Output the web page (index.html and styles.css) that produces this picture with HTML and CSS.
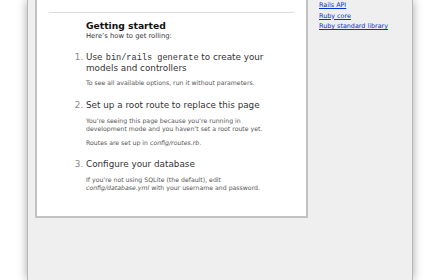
FILE: index.html
```html
<!DOCTYPE html>
<html>
<head>
<meta charset="utf-8">
<link rel="stylesheet" href="styles.css">
</head>
<body>
<div class="window">
  <div class="page">
    <div class="content">
      <div class="getting-started">
        <h1 class="gs-title">Getting started</h1>
        <h2 class="gs-sub">Here’s how to get rolling:</h2>
        <ol class="steps">
          <li class="step">
            <h2 class="step-title">Use <code class="cmd">bin/rails generate</code> to create your models and controllers</h2>
            <p class="step-text">To see all available options, run it without parameters.</p>
          </li>
          <li class="step">
            <h2 class="step-title">Set up a root route to replace this page</h2>
            <p class="step-text">You’re seeing this page because you’re running in development mode and you haven’t set a root route yet.</p>
            <p class="step-text">Routes are set up in <em>config/routes.rb</em>.</p>
          </li>
          <li class="step">
            <h2 class="step-title">Configure your database</h2>
            <p class="step-text">If you’re not using SQLite (the default), edit <em>config/database.yml</em> with your username and password.</p>
          </li>
        </ol>
      </div>
    </div>
    <div class="sidebar">
      <ul class="links">
        <li class="link-item"><a href="#">Rails API</a></li>
        <li class="link-item"><a href="#">Ruby core</a></li>
        <li class="link-item"><a href="#">Ruby standard library</a></li>
      </ul>
    </div>
  </div>
</div>
</body>
</html>
```
FILE: styles.css
```css
html, body {
  margin: 0;
  padding: 0;
  width: 440px;
  height: 280px;
  overflow: hidden;
  background: #ffffff;
}
body {
  font-family: "DejaVu Sans", "Noto Sans", sans-serif;
  color: #333;
}
.window {
  margin-left: 27px;
  width: 384px;
  height: 280px;
  background: #efefef;
  border-left: 1px solid #b8b8b8;
  border-right: 1px solid #b8b8b8;
  box-shadow: 0 0 9px rgba(0, 0, 0, 0.35);
}
.page {
  width: 368px;
  margin-left: 7px;
  display: flex;
  justify-content: space-between;
  align-items: flex-start;
}
.content {
  width: 245px;
  background: #fff;
  border: 2px solid #c2c2c2;
  border-top: none;
  padding: 0 12px 12px 12px;
}
.getting-started {
  margin-top: 12px;
  border-top: 1px solid #dcdcdc;
  padding: 7px 7px 0 37px;
}
.gs-title {
  margin: 0;
  font-size: 9.2px;
  line-height: 12px;
  font-weight: bold;
  color: #111;
}
.gs-sub {
  margin: 0 0 12px 0;
  font-size: 6.8px;
  line-height: 8px;
  font-weight: normal;
  color: #333;
}
.steps {
  margin: 0;
  padding: 0;
}
.step {
  font-size: 8.8px;
  color: #888;
  margin-bottom: 12.25px;
}
.step-title {
  margin: 0;
  font-size: 8.8px;
  line-height: 10.5px;
  font-weight: normal;
  color: #333;
}
.cmd {
  font-family: "Liberation Mono", monospace;
  font-size: 8.6px;
  line-height: 1;
  margin-left: 0.5px;
}
.step-text {
  margin: 6.4px 0;
  max-width: 178px;
  font-size: 6.2px;
  line-height: 8px;
  color: #555;
}
.sidebar {
  width: 84px;
}
.links {
  margin: 1px 0 0 0;
  padding: 0;
  list-style: none;
}
.link-item {
  font-size: 6.4px;
  line-height: 8.2px;
  margin-bottom: 2.5px;
}
.link-item a {
  color: #03c;
}
```
